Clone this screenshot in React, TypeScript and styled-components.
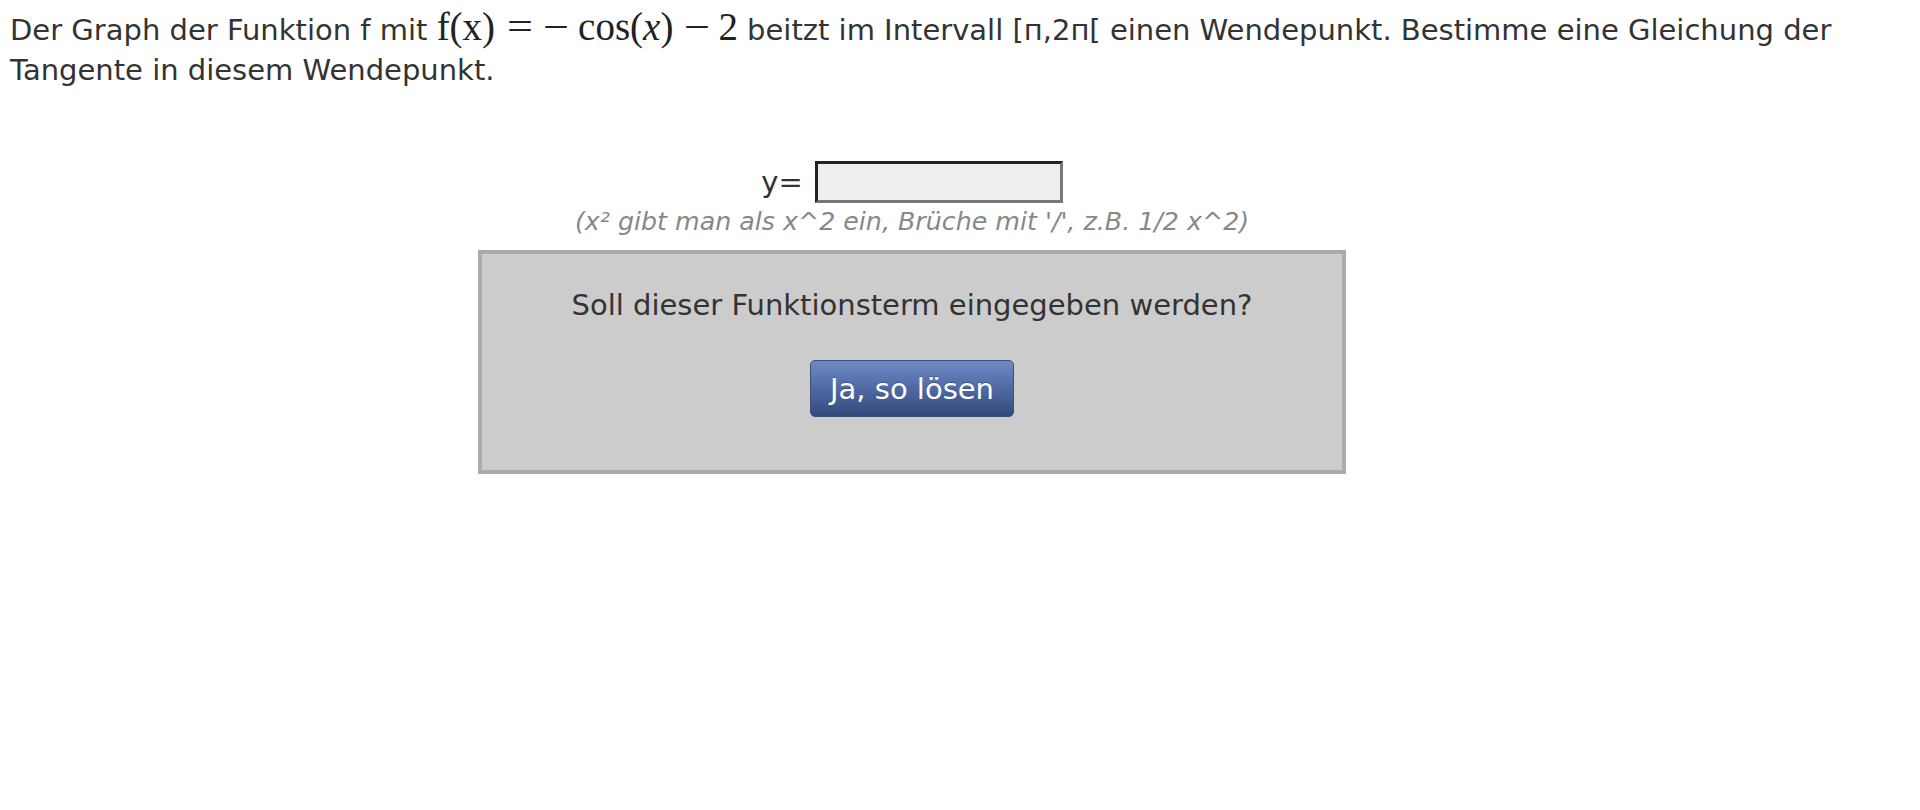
import React from "react";
import styled, { createGlobalStyle } from "styled-components";

const GlobalStyle = createGlobalStyle`
  html, body {
    margin: 0;
    padding: 0;
    background: #ffffff;
  }
  body {
    padding: 7px 8px 0 10px;
    font-family: "DejaVu Sans", Verdana, sans-serif;
    font-size: 29px;
    color: #333333;
  }
`;

const Page = styled.main`
  display: flex;
  flex-direction: column;
`;

const Question = styled.p`
  margin: 0;
  line-height: 40px;
`;

const MathExpr = styled.span`
  font-family: "Liberation Serif", "Times New Roman", serif;
  font-size: 39px;
  line-height: 1;
  white-space: nowrap;
  color: #222;
`;

const MathVar = styled.span`
  font-style: italic;
`;

const MathSymbol = styled.span`
  display: inline-block;
  transform: scaleX(1.18);
`;

const MathSpace = styled.span<{ $w: number }>`
  display: inline-block;
  width: ${(p) => p.$w}px;
`;

const AnswerArea = styled.section`
  width: 1804px;
  margin-top: 71px;
  display: flex;
  flex-direction: column;
  align-items: center;
`;

const InputRow = styled.label`
  display: flex;
  align-items: center;
  gap: 12px;
  height: 42px;
`;

const Label = styled.span`
  line-height: 42px;
`;

const TermInput = styled.input`
  box-sizing: border-box;
  width: 248px;
  height: 42px;
  margin: 0;
  padding: 0 6px;
  background: #eeeeee;
  border-style: solid;
  border-width: 3px;
  border-color: #222222 #777777 #777777 #222222;
  font-family: inherit;
  font-size: 24px;
  outline: none;
`;

const Hint = styled.div`
  font-size: 25.3px;
  font-style: italic;
  color: #888888;
  line-height: 30px;
  margin-top: 4px;
`;

const ConfirmBox = styled.div`
  box-sizing: border-box;
  width: 868px;
  margin-top: 13px;
  padding: 33px 0 53px;
  background: #cccccc;
  border: 4px solid #aaaaaa;
  display: flex;
  flex-direction: column;
  align-items: center;
`;

const ConfirmText = styled.div`
  line-height: 36px;
  color: #333333;
`;

const SolveButton = styled.button`
  margin-top: 37px;
  height: 57px;
  padding: 0 19px;
  font-family: inherit;
  font-size: 29px;
  color: #ffffff;
  border: 1px solid #3a4f7e;
  border-radius: 5px;
  background: linear-gradient(to bottom, #6d8ac6 0%, #4f6aa3 50%, #34497a 100%);
  text-shadow: 0 -1px 0 rgba(0, 0, 0, 0.25);
  cursor: pointer;
`;

export default function App() {
  return (
    <>
      <GlobalStyle />
      <Page>
        <Question>
          Der Graph der Funktion f mit{" "}
          <MathExpr>
            f(x)
            <MathSpace $w={14} />
            <MathSymbol>=</MathSymbol>
            <MathSpace $w={14} />
            <MathSymbol>−</MathSymbol>
            <MathSpace $w={11} />
            cos(<MathVar>x</MathVar>)
            <MathSpace $w={13} />
            <MathSymbol>−</MathSymbol>
            <MathSpace $w={10} />2
          </MathExpr>{" "}
          beitzt im Intervall [п,2п[ einen Wendepunkt. Bestimme eine Gleichung der
          Tangente in diesem Wendepunkt.
        </Question>
        <AnswerArea>
          <InputRow>
            <Label>y=</Label>
            <TermInput type="text" aria-label="y" />
          </InputRow>
          <Hint>(x² gibt man als x^2 ein, Brüche mit '/', z.B. 1/2 x^2)</Hint>
          <ConfirmBox>
            <ConfirmText>Soll dieser Funktionsterm eingegeben werden?</ConfirmText>
            <SolveButton type="button">Ja, so lösen</SolveButton>
          </ConfirmBox>
        </AnswerArea>
      </Page>
    </>
  );
}
